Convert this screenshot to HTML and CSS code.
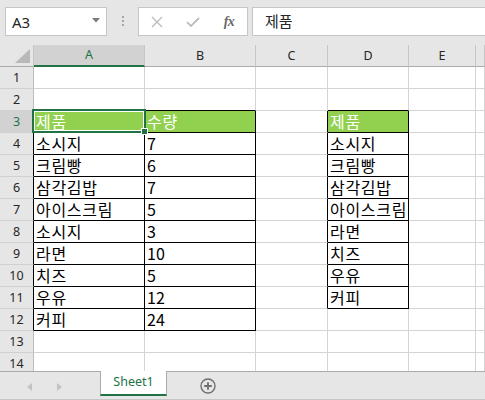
FILE: index.html
```html
<!DOCTYPE html>
<html lang="ko">
<head>
<meta charset="utf-8">
<title>Excel</title>
<link rel="stylesheet" href="styles.css">
</head>
<body>
<div class="app">
  <div class="fbar">
    <div class="namebox"><span class="nb-text">A3</span><svg class="caret" width="8" height="5" viewBox="0 0 8 5"><path d="M0 0H8L4 4.5Z" fill="#7a7a7a"/></svg></div>
    <div class="grip"><i></i><i></i><i></i></div>
    <div class="fbtns">
      <span class="fbtn"><svg width="12" height="12" viewBox="0 0 12 12"><path d="M1 1L11 11M11 1L1 11" stroke="#bdbdbd" stroke-width="1.4" fill="none"/></svg></span>
      <span class="fbtn"><svg width="14" height="10" viewBox="0 0 14 10"><path d="M1 5.2L5 9L13 1" stroke="#bdbdbd" stroke-width="1.8" fill="none"/></svg></span>
      <span class="fbtn fx">fx</span>
    </div>
    <div class="finput">제품</div>
  </div>

  <div class="sheet">
    <div class="grid">
      <div class="corner"><svg width="15" height="14" viewBox="0 0 15 14"><path d="M15 0V14H0Z" fill="#b9b9b9"/></svg></div>
      <div class="h on">A</div><div class="h">B</div><div class="h">C</div><div class="h">D</div><div class="h">E</div><div class="h"></div>

      <div class="r">1</div><div class="c"></div><div class="c"></div><div class="c"></div><div class="c"></div><div class="c"></div><div class="c"></div>
      <div class="r">2</div><div class="c kb"></div><div class="c kb"></div><div class="c"></div><div class="c kb"></div><div class="c"></div><div class="c"></div>
      <div class="r on kr">3</div><div class="c k g">제품</div><div class="c k g">수량</div><div class="c kr"></div><div class="c k g">제품</div><div class="c"></div><div class="c"></div>
      <div class="r kr">4</div><div class="c k">소시지</div><div class="c k n">7</div><div class="c kr"></div><div class="c k">소시지</div><div class="c"></div><div class="c"></div>
      <div class="r kr">5</div><div class="c k">크림빵</div><div class="c k n">6</div><div class="c kr"></div><div class="c k">크림빵</div><div class="c"></div><div class="c"></div>
      <div class="r kr">6</div><div class="c k">삼각김밥</div><div class="c k n">7</div><div class="c kr"></div><div class="c k">삼각김밥</div><div class="c"></div><div class="c"></div>
      <div class="r kr">7</div><div class="c k">아이스크림</div><div class="c k n">5</div><div class="c kr"></div><div class="c k">아이스크림</div><div class="c"></div><div class="c"></div>
      <div class="r kr">8</div><div class="c k">소시지</div><div class="c k n">3</div><div class="c kr"></div><div class="c k">라면</div><div class="c"></div><div class="c"></div>
      <div class="r kr">9</div><div class="c k">라면</div><div class="c k n">10</div><div class="c kr"></div><div class="c k">치즈</div><div class="c"></div><div class="c"></div>
      <div class="r kr">10</div><div class="c k">치즈</div><div class="c k n">5</div><div class="c kr"></div><div class="c k">우유</div><div class="c"></div><div class="c"></div>
      <div class="r kr">11</div><div class="c k">우유</div><div class="c k n">12</div><div class="c kr"></div><div class="c k">커피</div><div class="c"></div><div class="c"></div>
      <div class="r kr">12</div><div class="c k">커피</div><div class="c k n">24</div><div class="c"></div><div class="c"></div><div class="c"></div><div class="c"></div>
      <div class="r">13</div><div class="c"></div><div class="c"></div><div class="c"></div><div class="c"></div><div class="c"></div><div class="c"></div>
      <div class="r">14</div><div class="c"></div><div class="c"></div><div class="c"></div><div class="c"></div><div class="c"></div><div class="c"></div>
    </div>
    <div class="sel"></div>
    <div class="handle"></div>
  </div>

  <div class="tabs">
    <div class="nav">
      <svg class="arr" width="5" height="8" viewBox="0 0 5 8"><path d="M5 0V8L0 4Z" fill="#c3c3c3"/></svg>
      <svg class="arr" width="5" height="8" viewBox="0 0 5 8"><path d="M0 0V8L5 4Z" fill="#c3c3c3"/></svg>
    </div>
    <div class="tab">Sheet1</div>
    <div class="add"><svg width="16" height="16" viewBox="0 0 16 16"><circle cx="8" cy="8" r="7" stroke="#707070" stroke-width="1.4" fill="none"/><path d="M8 4.2V11.8M4.2 8H11.8" stroke="#707070" stroke-width="1.8"/></svg></div>
  </div>
</div>
</body>
</html>
```

FILE: styles.css
```css
html, body {
  margin: 0;
  padding: 0;
}
body {
  width: 485px;
  height: 400px;
  overflow: hidden;
  background: #e6e6e6;
  font-family: "Noto Sans", "Noto Sans CJK KR", sans-serif;
}
.app {
  width: 485px;
  height: 400px;
  display: flex;
  flex-direction: column;
  overflow: hidden;
}

/* formula bar */
.fbar {
  height: 45px;
  flex: none;
  box-sizing: border-box;
  padding: 7px 0 0 5px;
  display: flex;
  align-items: flex-start;
  background: #e6e6e6;
}
.namebox {
  width: 102px;
  height: 29px;
  box-sizing: border-box;
  border: 1px solid #c6c6c6;
  background: #fff;
  display: flex;
  align-items: center;
  justify-content: space-between;
  padding: 0 6px 0 6px;
}
.nb-text {
  font-family: "Noto Sans", sans-serif;
  font-size: 15px;
  color: #262626;
  line-height: 20px;
}
.caret {
  display: block;
  margin-top: -2px;
}
.grip {
  width: 31px;
  height: 29px;
  display: flex;
  flex-direction: column;
  align-items: center;
  justify-content: flex-start;
  padding-top: 9px;
  box-sizing: border-box;
  gap: 2px;
}
.grip i {
  width: 2px;
  height: 2px;
  background: #a6a6a6;
  display: block;
}
.fbtns {
  width: 110px;
  height: 29px;
  box-sizing: border-box;
  border: 1px solid #c6c6c6;
  background: #fff;
  display: flex;
  align-items: center;
}
.fbtn {
  width: 36px;
  height: 27px;
  display: flex;
  align-items: center;
  justify-content: center;
}
.fbtn svg {
  display: block;
}
.fx {
  font-family: "Liberation Serif", serif;
  font-style: italic;
  font-weight: bold;
  font-size: 14px;
  color: #6b6b6b;
  letter-spacing: -0.5px;
}
.finput {
  flex: 1;
  margin-left: 4px;
  margin-right: -4px;
  height: 29px;
  box-sizing: border-box;
  border: 1px solid #c6c6c6;
  background: #fff;
  padding-left: 12px;
  font-family: "Noto Sans CJK KR", sans-serif;
  font-size: 15px;
  line-height: 26px;
  color: #262626;
}

/* sheet */
.sheet {
  position: relative;
  height: 326px;
  flex: none;
  overflow: hidden;
  background: #fff;
}
.grid {
  display: grid;
  grid-template-columns: 34px 111px 111px 72px 81px 67px 1fr;
  grid-auto-rows: 22px;
}
.corner {
  background: #e6e6e6;
  border-bottom: 1px solid #ababab;
  border-right: 1px solid #c6c6c6;
  box-sizing: border-box;
  display: flex;
  align-items: flex-end;
  justify-content: flex-end;
  padding: 0 3px 3px 0;
}
.corner svg {
  display: block;
}
.h {
  background: #e6e6e6;
  border-right: 1px solid #c6c6c6;
  border-bottom: 1px solid #ababab;
  box-sizing: border-box;
  text-align: center;
  font-family: "Noto Sans", sans-serif;
  font-size: 12.5px;
  line-height: 21px;
  color: #262626;
}
.h.on {
  background: #d2d2d2;
  color: #217346;
  border-bottom: 2px solid #217346;
  line-height: 20px;
}
.r {
  background: #e6e6e6;
  border-right: 1px solid #bcbcbc;
  border-bottom: 1px solid #d0d0d0;
  box-sizing: border-box;
  text-align: center;
  font-family: "Noto Sans", sans-serif;
  font-size: 12.5px;
  line-height: 21px;
  color: #262626;
}
.r.on {
  background: #d2d2d2;
  color: #217346;
}
.c {
  border-right: 1px solid #d4d4d4;
  border-bottom: 1px solid #d4d4d4;
  box-sizing: border-box;
  padding-left: 2px;
  font-family: "Noto Sans CJK KR", sans-serif;
  font-size: 16px;
  letter-spacing: 0.7px;
  line-height: 21px;
  color: #000;
  white-space: nowrap;
}
.c.n {
  letter-spacing: 0;
}
.c.k {
  border-right-color: #000;
  border-bottom-color: #000;
}
.kb {
  border-bottom-color: #000;
}
.kr {
  border-right-color: #000;
}
.c.g {
  background: #92d050;
  color: #fff;
}

/* active cell selection */
.sel {
  position: absolute;
  left: 32px;
  top: 64px;
  width: 114px;
  height: 24px;
  box-sizing: border-box;
  border: 2px solid #217346;
  box-shadow: inset 0 0 0 1px #fff;
}
.handle {
  position: absolute;
  left: 141px;
  top: 83px;
  width: 7px;
  height: 7px;
  box-sizing: border-box;
  border: 1px solid #fff;
  background: #217346;
}

/* sheet tabs */
.tabs {
  height: 29px;
  flex: none;
  box-sizing: border-box;
  border-top: 1px solid #ababab;
  border-bottom: 1px solid #c6c6c6;
  background: #e6e6e6;
  display: flex;
  align-items: flex-start;
}
.nav {
  width: 100px;
  height: 27px;
  display: flex;
  align-items: center;
  padding-left: 27px;
  box-sizing: border-box;
  gap: 25px;
}
.arr {
  display: block;
  margin-top: 2px;
}
.tab {
  margin-top: -1px;
  width: 67px;
  height: 25px;
  box-sizing: border-box;
  background: #fff;
  border-left: 1px solid #ababab;
  border-right: 1px solid #ababab;
  border-bottom: 2px solid #217346;
  text-align: center;
  font-family: "Noto Sans", sans-serif;
  font-size: 12.5px;
  line-height: 22px;
  color: #217346;
}
.add {
  margin-left: 33px;
  margin-top: 6px;
}
.add svg {
  display: block;
}
```
